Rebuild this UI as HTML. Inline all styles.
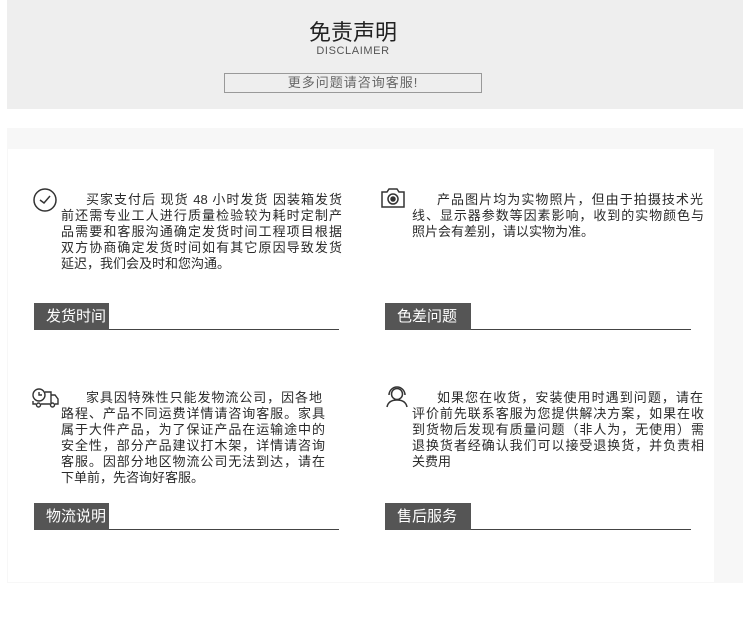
<!DOCTYPE html>
<html><head><meta charset="utf-8"><style>
*{margin:0;padding:0;box-sizing:border-box}
body{width:750px;height:629px;background:#fff;position:relative;overflow:hidden;font-family:"Liberation Sans","Noto Sans CJK SC",sans-serif;color:#222}
.a{position:absolute}
.ln{position:absolute;height:16px;line-height:16px;font-size:13px;white-space:nowrap;text-align:justify;text-align-last:justify;color:#2a2a2a}
.ln.l{text-align-last:left}
.lab{position:absolute;background:#555;color:#fff;font-size:15px;height:27px;line-height:27px;padding-left:12px;width:75px;white-space:nowrap;overflow:visible}
.lab.w{width:86px}
.rule{position:absolute;height:1px;background:#444}
</style></head><body>
<div class="a" style="left:7px;top:0;width:736px;height:109px;background:#eeeeee"></div>
<div class="a" style="left:0;top:19px;width:706px;text-align:center;font-size:22px;color:#222;line-height:28px">免责声明</div>
<div class="a" style="left:0;top:45px;width:706px;text-align:center;font-size:11px;color:#555;letter-spacing:0.6px">DISCLAIMER</div>
<div class="a" style="left:224px;top:73px;width:258px;height:20px;border:1px solid #999;text-align:center;font-size:13px;line-height:18px;color:#666;letter-spacing:1px">更多问题请咨询客服!</div>

<div class="a" style="left:7px;top:128px;width:736px;height:455px;background:#f7f7f7"></div>
<div class="a" style="left:8px;top:149px;width:706px;height:433px;background:#fff"></div>

<svg class="a" style="left:32px;top:187px" width="26" height="26" viewBox="0 0 26 26" fill="none" stroke="#333" stroke-width="1.5"><circle cx="13" cy="13" r="11"/><path d="M8 13l4 3 6-7"/></svg>
<div class="ln" style="left:86px;top:192px;width:256px">买家支付后 现货 48 小时发货 因装箱发货</div>
<div class="ln" style="left:61px;top:208px;width:281px">前还需专业工人进行质量检验较为耗时定制产</div>
<div class="ln" style="left:61px;top:224px;width:281px">品需要和客服沟通确定发货时间工程项目根据</div>
<div class="ln" style="left:61px;top:240px;width:281px">双方协商确定发货时间如有其它原因导致发货</div>
<div class="ln l" style="left:61px;top:256px;width:281px">延迟，我们会及时和您沟通。</div>
<div class="lab" style="left:34px;top:303px">发货时间</div>
<div class="rule" style="left:109px;top:329px;width:230px"></div>

<svg class="a" style="left:379px;top:186px" width="28" height="24" viewBox="0 0 28 24" fill="none" stroke="#333" stroke-width="1.5"><path d="M3 6h5l2-3h8l2 3h5v15H3z"/><circle cx="14" cy="13" r="5"/><circle cx="14" cy="13" r="2" fill="#333"/></svg>
<div class="ln" style="left:437px;top:192px;width:266px">产品图片均为实物照片，但由于拍摄技术光</div>
<div class="ln" style="left:412px;top:208px;width:292px">线、显示器参数等因素影响，收到的实物颜色与</div>
<div class="ln l" style="left:412px;top:224px;width:292px">照片会有差别，请以实物为准。</div>
<div class="lab w" style="left:385px;top:303px">色差问题</div>
<div class="rule" style="left:471px;top:329px;width:220px"></div>

<svg class="a" style="left:31px;top:387px" width="30" height="22" viewBox="0 0 30 22" fill="none" stroke="#333" stroke-width="1.4"><circle cx="8" cy="8" r="6"/><path d="M8 5v3h3"/><path d="M14 5h6v12M20 8h4l3 4v5h-3M2 14v3h3M10 17h9"/><circle cx="7.5" cy="18" r="2"/><circle cx="21.5" cy="18" r="2"/></svg>
<div class="ln" style="left:86px;top:390px;width:236px">家具因特殊性只能发物流公司，因各地</div>
<div class="ln" style="left:61px;top:406px;width:264px">路程、产品不同运费详情请咨询客服。家具</div>
<div class="ln" style="left:61px;top:422px;width:264px">属于大件产品，为了保证产品在运输途中的</div>
<div class="ln" style="left:61px;top:438px;width:264px">安全性，部分产品建议打木架，详情请咨询</div>
<div class="ln" style="left:61px;top:454px;width:264px">客服。因部分地区物流公司无法到达，请在</div>
<div class="ln l" style="left:61px;top:470px;width:264px">下单前，先咨询好客服。</div>
<div class="lab" style="left:34px;top:503px">物流说明</div>
<div class="rule" style="left:109px;top:529px;width:230px"></div>

<svg class="a" style="left:385px;top:385px" width="24" height="24" viewBox="0 0 24 24" fill="none" stroke="#333" stroke-width="1.5"><circle cx="12" cy="9" r="5.5"/><path d="M4 10a8 8 0 0 1 16 0M2 22c1-5 5-7 10-7s9 2 10 7"/></svg>
<div class="ln" style="left:437px;top:390px;width:266px">如果您在收货，安装使用时遇到问题，请在</div>
<div class="ln" style="left:412px;top:406px;width:292px">评价前先联系客服为您提供解决方案，如果在收</div>
<div class="ln" style="left:412px;top:422px;width:292px">到货物后发现有质量问题（非人为，无使用）需</div>
<div class="ln" style="left:412px;top:438px;width:292px">退换货者经确认我们可以接受退换货，并负责相</div>
<div class="ln l" style="left:412px;top:454px;width:292px">关费用</div>
<div class="lab w" style="left:385px;top:503px">售后服务</div>
<div class="rule" style="left:471px;top:529px;width:220px"></div>
</body></html>
